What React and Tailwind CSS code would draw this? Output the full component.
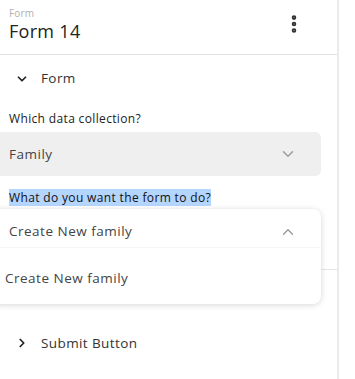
import { ChevronDown, ChevronUp, ChevronRight, EllipsisVertical } from "lucide-react";

export default function App() {
  return (
    <div
      className="w-[355px] h-[379px] bg-white overflow-hidden flex"
      style={{ fontFamily: '"Open Sans", "Liberation Sans", sans-serif' }}
    >
      {/* Side panel */}
      <div className="w-[339px] h-full border-r-2 border-[#ebebeb] flex flex-col shrink-0">
        {/* Header */}
        <div className="h-[55px] border-b border-[#e3e3e3] flex items-center justify-between pl-[9px] pr-[32px] shrink-0">
          <div className="flex flex-col -mt-[5px]">
            <span className="text-[10px] leading-[12px] text-[#b0b0b0] tracking-[0.2px]">Form</span>
            <span className="text-[18px] leading-[22px] text-[#222] font-medium tracking-[0.3px] mt-[1px]">Form 14</span>
          </div>
          <EllipsisVertical size={22} strokeWidth={3} className="text-[#333] -mt-[6px]" />
        </div>

        {/* Form section */}
        <div className="flex items-center h-[47px] pl-[15px] gap-[12px] text-[13.5px] tracking-[0.4px] text-[#333] shrink-0">
          <ChevronDown size={14} strokeWidth={3} className="text-[#222]" />
          <span>Form</span>
        </div>

        <div className="pl-[9px] pt-[9px] text-[12px] leading-[16px] tracking-[0.35px] text-[#222]">Which data collection?</div>

        <div className="ml-[-8px] w-[329px] h-[44px] mt-[5px] bg-[#efefef] rounded-[6px] flex items-center justify-between pl-[17px] pr-[24px] text-[13.5px] tracking-[0.5px] text-[#444] shrink-0">
          <span>Family</span>
          <ChevronDown size={18} strokeWidth={1.8} className="text-[#9a9a9a]" />
        </div>

        <div className="pl-[9px] mt-[15px] text-[12px] leading-[14px] tracking-[0.35px] text-[#111]">
          <span className="bg-[#b4d5fe]">What do you want the form to do?</span>
        </div>

        {/* Open select + its menu, laid over the section divider */}
        <div className="relative h-[60px] mt-[4px] shrink-0">
          <div className="border-b border-[#e6e6e6] absolute left-0 right-0 top-[60px]" />
          <div className="absolute left-[-8px] w-[329px] top-0 bg-white rounded-[8px] shadow-[0_1px_6px_rgba(0,0,0,0.16)] z-10">
            <div className="h-[39px] pt-[7px] flex items-center justify-between pl-[17px] pr-[24px] text-[13.5px] tracking-[0.5px] text-[#444] border-b border-[#f5f5f5]">
              <span>Create New family</span>
              <ChevronUp size={18} strokeWidth={1.8} className="text-[#9a9a9a]" />
            </div>
            <div className="h-[56px] pt-[4px] flex items-center pl-[13px] text-[13.5px] tracking-[0.5px] text-[#444]">Create New family</div>
          </div>
        </div>

        {/* Submit Button section */}
        <div className="flex items-center h-[48px] mt-[50px] pl-[15px] gap-[12px] text-[13.5px] tracking-[0.4px] text-[#333] shrink-0">
          <ChevronRight size={14} strokeWidth={3} className="text-[#222]" />
          <span>Submit Button</span>
        </div>
      </div>
      <div className="flex-1 bg-white" />
    </div>
  );
}
